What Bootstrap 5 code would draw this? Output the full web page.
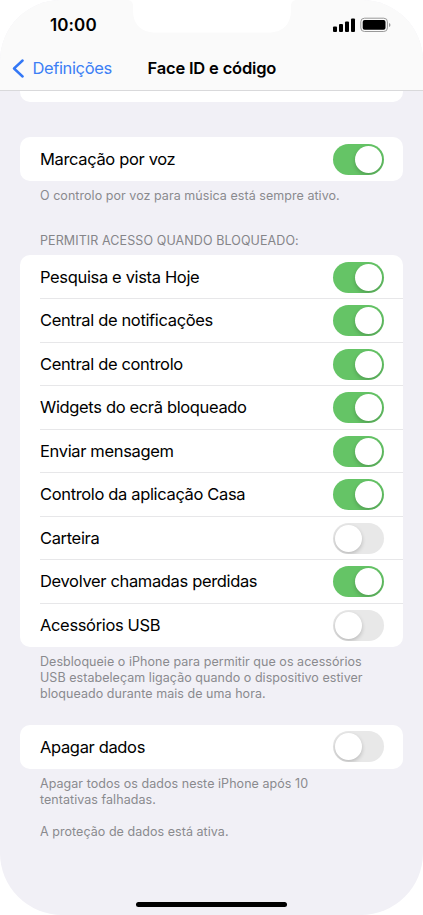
<!DOCTYPE html>
<html lang="pt">
<head>
<meta charset="utf-8">
<meta name="viewport" content="width=device-width, initial-scale=1">
<title>Face ID e código</title>
<link href="https://cdn.jsdelivr.net/npm/bootstrap@5.3.0/dist/css/bootstrap.min.css" rel="stylesheet">
<style>
body{font-family:Inter,"Liberation Sans",sans-serif;background:#fff;color:#000}
.phone{width:423px;height:915px;background:#f1f0f6;border-radius:61px 61px 62px 62px}
.topbar{height:91px;background:#fafafa;border-bottom:1px solid #d9d9db}
.notch{left:127px;top:0}
.status{height:50px;padding:0 32px 0 50px}
.clock{font-size:17px;font-weight:600;letter-spacing:.1px;line-height:50px}
.titles{height:37px;padding-left:12px;font-size:16.5px;line-height:37px}
.back{color:#3c7ff5;width:135.5px;gap:8.5px;letter-spacing:-.38px}
.heading{font-weight:600;letter-spacing:-.18px}
.group{margin:0 20px;border-radius:10px;--bs-list-group-border-radius:10px}
.group .list-group-item{height:43.5px;padding:0 19px 0 20px;border:0;color:#000;font-size:16.5px;letter-spacing:-.35px;background:#fff}
.group .list-group-item+.list-group-item::before{content:"";position:absolute;left:20px;right:0;top:-.5px;height:1px;background:#e7e7e9}
.cut{height:11px;margin:0 20px 35.3px;background:#fff;border-radius:0 0 10px 10px}
.note{margin:0 40px;padding-top:7.6px;font-size:12.5px;font-weight:400;line-height:15.8px;letter-spacing:.05px;color:#8a8a8e}
.caption{padding:29.1px 0 6.2px;letter-spacing:.1px;color:#858589}
.after-usb{padding-bottom:23.4px}
.protection{padding-top:16px}
.form-check-input.toggle{width:51px;height:31px;margin:0;border:0;border-radius:16px;background:#e8e8e8;position:relative;overflow:hidden;flex:none}
.form-check-input.toggle:checked{background:#65c466}
.toggle::before{content:"";position:absolute;width:27px;height:27px;border-radius:50%;background:#fff;left:2px;top:2px;box-shadow:0 2px 4px rgba(0,0,0,.2)}
.toggle:checked::before{left:22px}
.homebar{width:151px;height:5px;border-radius:3px;background:#000;margin-bottom:8px}
</style>
<script src="https://cdn.jsdelivr.net/npm/bootstrap@5.3.0/dist/js/bootstrap.bundle.min.js"></script>
</head>
<body>
<div class="phone position-relative overflow-hidden d-flex flex-column">
<header class="topbar flex-shrink-0">
<svg class="notch position-absolute" width="170" height="34" viewBox="0 0 170 34"><path d="M0 0C4 0 6 2 6 6V10C6 24 14 32.500 28 32.500H142C156 32.500 164 24 164 10V6C164 2 166 0 170 0Z" fill="#fff"/></svg>
<div class="status d-flex justify-content-between align-items-center">
<span class="clock">10:00</span>
<svg width="59" height="16" viewBox="0 0 59 16"><g><rect x="1" y="9.500" width="4" height="5.500" rx="1"/><rect x="7" y="7" width="4" height="8" rx="1"/><rect x="13" y="4.500" width="4" height="10.500" rx="1"/><rect x="19" y="1.500" width="4" height="13.500" rx="1"/></g><rect x="28.800" y="1.200" width="26.600" height="13.300" rx="3.600" fill="none" stroke="#999"/><rect x="30.700" y="3" width="22.800" height="9.700" rx="1.900"/><path d="M57 6V10Q58.500 9.500 58.500 8T57 6Z" fill="#999"/></svg>
</div>
<div class="titles d-flex align-items-center">
<a class="back d-flex align-items-center text-decoration-none" href="#"><svg width="12" height="19" viewBox="0 0 12 19" fill="none" stroke="#3478f6" stroke-width="2.400" stroke-linecap="round" stroke-linejoin="round"><path d="M10.600 1.500 2 9.500 10.600 17.500"/></svg><span>Definições</span></a>
<span class="heading">Face ID e código</span>
</div>
</header>
<main>
<div class="cut"></div>
<ul class="list-group group"><li class="list-group-item d-flex align-items-center justify-content-between"><span>Marcação por voz</span><input class="form-check-input toggle" type="checkbox" checked></li></ul>
<p class="note">O controlo por voz para música está sempre ativo.</p>
<h2 class="note caption">PERMITIR ACESSO QUANDO BLOQUEADO:</h2>
<ul class="list-group group">
<li class="list-group-item d-flex align-items-center justify-content-between"><span>Pesquisa e vista Hoje</span><input class="form-check-input toggle" type="checkbox" checked></li>
<li class="list-group-item d-flex align-items-center justify-content-between"><span>Central de notificações</span><input class="form-check-input toggle" type="checkbox" checked></li>
<li class="list-group-item d-flex align-items-center justify-content-between"><span>Central de controlo</span><input class="form-check-input toggle" type="checkbox" checked></li>
<li class="list-group-item d-flex align-items-center justify-content-between"><span>Widgets do ecrã bloqueado</span><input class="form-check-input toggle" type="checkbox" checked></li>
<li class="list-group-item d-flex align-items-center justify-content-between"><span>Enviar mensagem</span><input class="form-check-input toggle" type="checkbox" checked></li>
<li class="list-group-item d-flex align-items-center justify-content-between"><span>Controlo da aplicação Casa</span><input class="form-check-input toggle" type="checkbox" checked></li>
<li class="list-group-item d-flex align-items-center justify-content-between"><span>Carteira</span><input class="form-check-input toggle" type="checkbox"></li>
<li class="list-group-item d-flex align-items-center justify-content-between"><span>Devolver chamadas perdidas</span><input class="form-check-input toggle" type="checkbox" checked></li>
<li class="list-group-item d-flex align-items-center justify-content-between"><span>Acessórios USB</span><input class="form-check-input toggle" type="checkbox"></li>
</ul>
<p class="note after-usb">Desbloqueie o iPhone para permitir que os acessórios<br>USB estabeleçam ligação quando o dispositivo estiver<br>bloqueado durante mais de uma hora.</p>
<ul class="list-group group"><li class="list-group-item d-flex align-items-center justify-content-between"><span>Apagar dados</span><input class="form-check-input toggle" type="checkbox"></li></ul>
<p class="note">Apagar todos os dados neste iPhone após 10<br>tentativas falhadas.</p>
<p class="note protection">A proteção de dados está ativa.</p>
</main>
<div class="homebar mt-auto mx-auto"></div>
</div>
</body>
</html>
